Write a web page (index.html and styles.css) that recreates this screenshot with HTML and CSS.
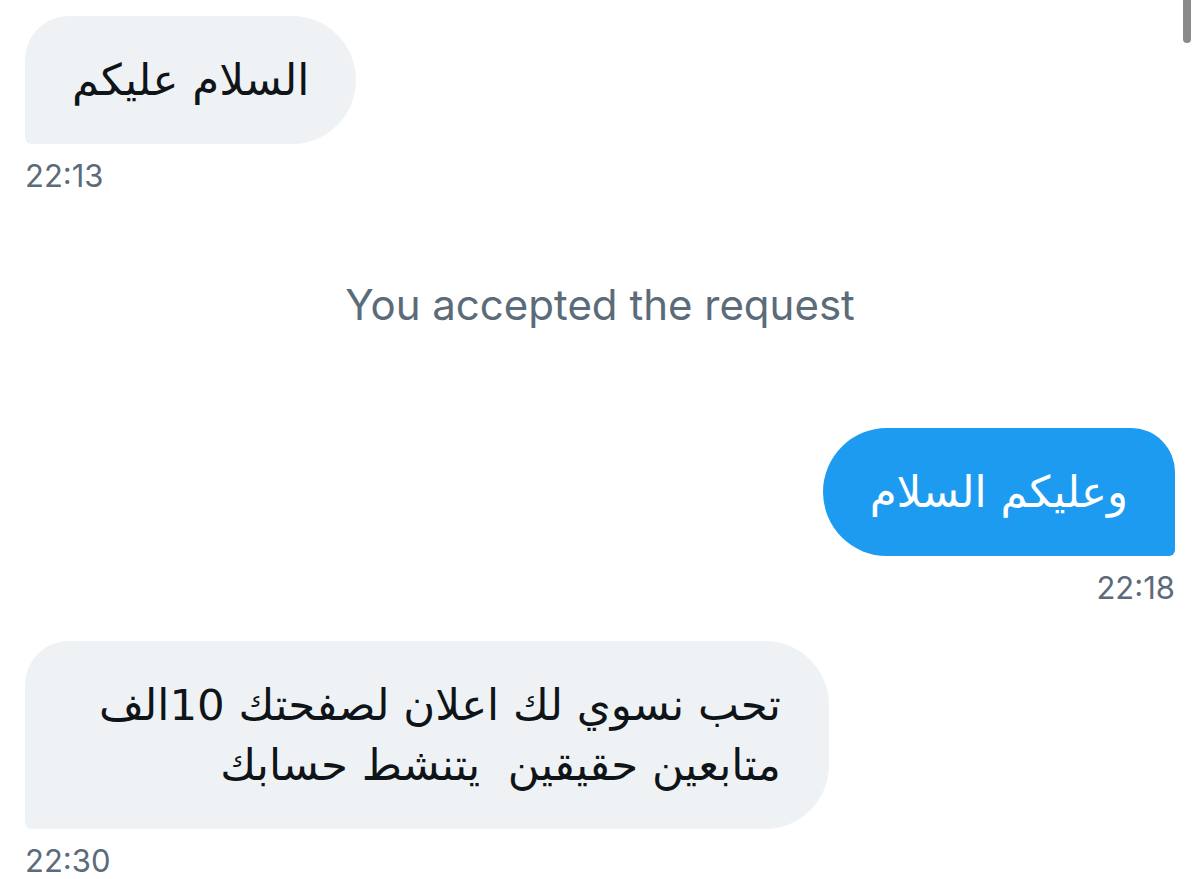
FILE: index.html
```html
<!DOCTYPE html>
<html lang="en">
<head>
    <meta charset="UTF-8">
    <meta name="viewport" content="width=device-width, initial-scale=1.0">
    <title>Messages</title>
    <link rel="stylesheet" href="styles.css">
</head>
<body>

<div class="scroll-thumb"></div>

<div class="chat">
    <div class="bubble received first" dir="rtl">السلام عليكم</div>
    <div class="time">22:13</div>

    <div class="notice">You accepted the request</div>

    <div class="bubble sent" dir="rtl">وعليكم السلام</div>
    <div class="time right">22:18</div>

    <div class="bubble received long" dir="rtl">تحب نسوي لك اعلان لصفحتك 10الف<br>متابعين حقيقين  يتنشط حسابك</div>
    <div class="time">22:30</div>
</div>

</body>
</html>
```

FILE: styles.css
```css
body {
    margin: 0;
    background: #ffffff;
    font-family: Inter, "Liberation Sans", sans-serif;
    overflow: hidden;
}

.scroll-thumb {
    position: absolute;
    top: 0;
    right: 9px;
    width: 8px;
    height: 43px;
    background: #8a8a8a;
    border-radius: 0 0 4px 4px;
}

.chat {
    display: flex;
    flex-direction: column;
    align-items: flex-start;
    padding: 16px 25px 0 25px;
}

.bubble {
    font-family: "DejaVu Sans", sans-serif;
    font-size: 43.5px;
    line-height: 60px;
    padding: 34px 47px;
    white-space: pre-wrap;
    text-align: right;
    color: #0f1419;
}

.received {
    background: #eff2f4;
    border-radius: 44px 64px 64px 6px;
}

.sent {
    align-self: flex-end;
    background: #1d9bf0;
    color: #ffffff;
    border-radius: 64px 44px 6px 64px;
    margin-top: 98px;
}

.long {
    margin-top: 36px;
    padding-left: 74px;
    padding-right: 48px;
}

.time {
    font-size: 31px;
    line-height: 34px;
    color: #5b6b7a;
    margin-top: 15px;
}

.time.right {
    align-self: flex-end;
}

.notice {
    align-self: center;
    font-size: 42px;
    line-height: 50px;
    color: #5b6b7a;
    margin-top: 87px;
}
```
